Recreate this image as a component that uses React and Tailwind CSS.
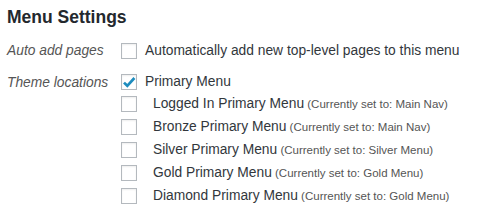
const locations = [
  { name: 'Primary Menu', checked: true },
  { name: 'Logged In Primary Menu', note: 'Main Nav' },
  { name: 'Bronze Primary Menu', note: 'Main Nav' },
  { name: 'Silver Primary Menu', note: 'Silver Menu' },
  { name: 'Gold Primary Menu', note: 'Gold Menu' },
  { name: 'Diamond Primary Menu', note: 'Gold Menu' },
]

function Box({ checked }) {
  return (
    <span className="relative h-4 w-4 shrink-0 border border-[#b4b9be] bg-white shadow-[inset_0_1px_2px_rgba(0,0,0,0.07)]">
      {checked && (
        <svg viewBox="0 0 16 16" className="absolute -left-px -top-px h-4 w-4">
          <path d="M3 8.6 L6.3 11.8 L13.4 4" fill="none" stroke="#1e8cbe" strokeWidth="2.7" />
        </svg>
      )}
    </span>
  )
}

export default function App() {
  return (
    <div className="h-[222px] w-[487px] bg-white px-[7px] pt-[6px] text-[13.8px] text-[#32373c]" style={{ fontFamily: '"Liberation Sans", Arial, sans-serif' }}>
      <h3 className="text-[17.5px] font-bold leading-[23px] text-[#23282d]">Menu Settings</h3>

      <div className="mt-[12px] flex items-center">
        <div className="w-[114px] italic text-[#555]">Auto add pages</div>
        <label className="flex h-4 items-center gap-2">
          <Box />
          <span>Automatically add new top-level pages to this menu</span>
        </label>
      </div>

      <div className="mt-[12px] flex">
        <div className="w-[114px] pt-[1px] italic leading-[16px] text-[#555]">Theme locations</div>
        <ul className="flex flex-col">
          {locations.map((loc) => (
            <li key={loc.name} className="flex h-[22.8px] items-start">
              <Box checked={loc.checked} />
              <span className={loc.checked ? 'ml-2 leading-[16px]' : 'ml-4 leading-[16px]'}>
                {loc.name}
                {loc.note && (
                  <span className="text-[11.5px] text-[#555]"> (Currently set to: {loc.note})</span>
                )}
              </span>
            </li>
          ))}
        </ul>
      </div>
    </div>
  )
}
